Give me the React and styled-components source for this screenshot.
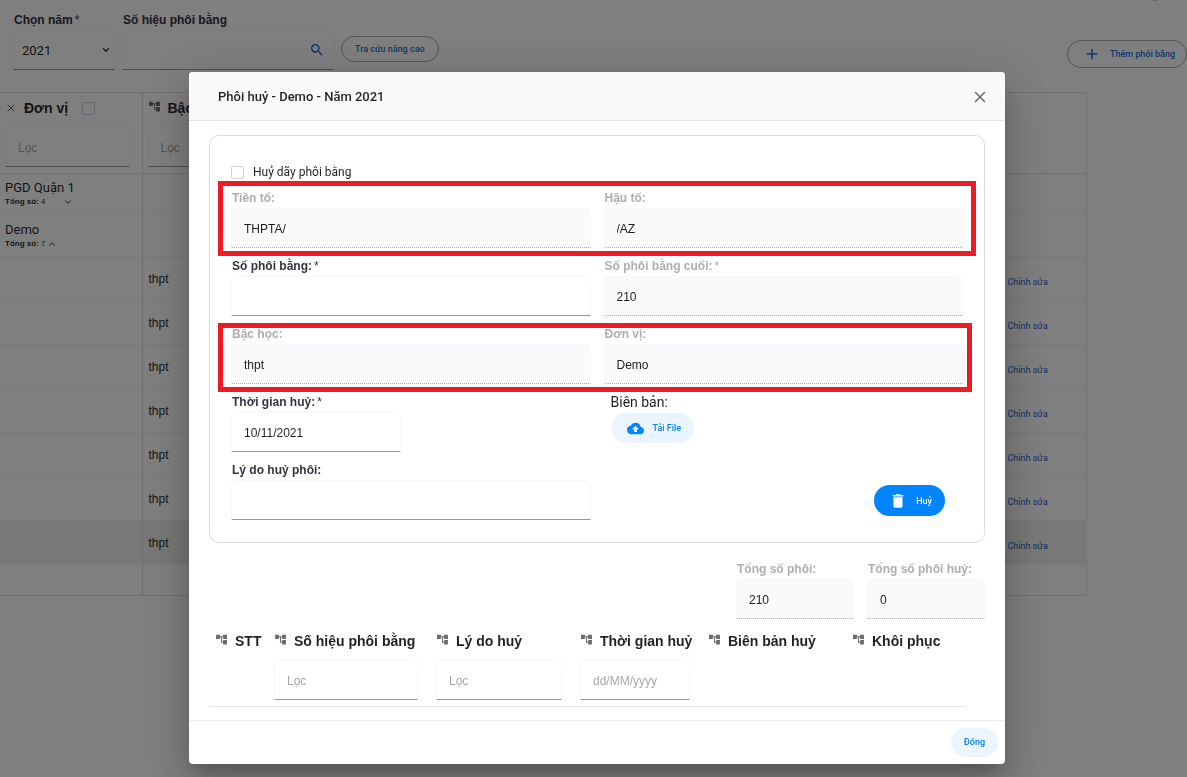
import React, { useId } from 'react';
import styled, { createGlobalStyle, css } from 'styled-components';
import { MdAccountTree, MdAdd, MdCloudUpload, MdDelete, MdSearch } from 'react-icons/md';
import { ChevronDown, ChevronUp, X } from 'lucide-react';

const GlobalStyle = createGlobalStyle`
  *, *::before, *::after { box-sizing: border-box; }
  body {
    margin: 0;
    background: #fff;
    color: rgba(0, 0, 0, 0.87);
    font-family: Roboto, "Liberation Sans", sans-serif;
    font-size: 12px;
    line-height: 16px;
  }
  button, input, select { font: inherit; color: inherit; }
`;

const sans = '"Liberation Sans", Arial, sans-serif';

/* ---------- shared controls ---------- */

const FieldBox = styled.div`
  display: flex;
  flex-direction: column;
  width: ${(p) => p.$width || 'auto'};
  min-width: 0;
`;

const FieldLabel = styled.label`
  padding: 0 1px;
  color: ${(p) => (p.$muted ? '#aeaeb1' : '#33333d')};
  font-family: ${sans};
  font-weight: 700;
  line-height: 20px;
  white-space: nowrap;
`;

const Star = styled.span`
  margin-left: 2px;
  font-weight: 400;
`;

const control = css`
  width: 100%;
  height: 40px;
  padding: 1px 12px 0;
  background: transparent;
  border: 1px solid #f7f7f9;
  border-bottom: 1px solid #999;
  border-radius: 6px 6px 0 0;
  outline: none;
`;

const TextInput = styled.input`
  ${control}
  font-family: ${sans};
  font-weight: 400;
  &::placeholder { color: #a8a8ab; opacity: 1; }
  &:disabled {
    background: #fafafc;
    border-bottom: 1px dotted #a8a8ab;
    color: #1c1c1e;
    opacity: 1;
  }
`;

const Select = styled.select`
  ${control}
  appearance: none;
  grid-area: 1 / 1;
  padding-left: 8px;
  font-size: 13px;
`;

const ControlStack = styled.div`
  display: grid;
  align-items: center;
  & > input { grid-area: 1 / 1; }
`;

const TrailingIcon = styled.span`
  grid-area: 1 / 1;
  justify-self: end;
  display: flex;
  padding-right: ${(p) => p.$inset};
  color: ${(p) => p.$color};
  pointer-events: none;
`;

const CheckInput = styled.input`
  appearance: none;
  flex: none;
  width: 13px;
  height: 13px;
  margin: 0;
  border: 1px solid #cfcfe0;
  border-radius: 2px;
`;

const variants = {
  outline: css`background: transparent; border: 1px solid #a8a8a8; color: #1b6fdc;`,
  soft: css`background: #ecf5ff; border: 0; color: #0084ff;`,
  solid: css`background: #0084ff; border: 0; color: #fff;`,
};

const Pill = styled.button`
  display: inline-flex;
  align-items: center;
  justify-content: center;
  gap: ${(p) => p.$gap || '0'};
  height: ${(p) => p.$height};
  padding: 0 ${(p) => p.$padRight || '13px'} 0 ${(p) => p.$padLeft || '13px'};
  border-radius: 16px;
  font-size: 9px;
  font-weight: 500;
  white-space: nowrap;
  ${(p) => variants[p.$variant]}
`;

const IconButton = styled.button`
  display: flex;
  padding: 0;
  background: none;
  border: 0;
  color: #6b6b6b;
`;

function Field({ label, required, width, ...input }) {
  const id = useId();
  return (
    <FieldBox $width={width}>
      <FieldLabel htmlFor={id} $muted={input.disabled}>
        {label}
        {required && <Star>*</Star>}
      </FieldLabel>
      <TextInput id={id} {...input} />
    </FieldBox>
  );
}

/* ---------- page behind the dialog ---------- */

const Page = styled.main`
  position: relative;
  overflow: hidden;
`;

const Notice = styled.span`
  position: absolute;
  top: -11px;
  right: 26px;
  width: 12px;
  height: 12px;
  border-radius: 50%;
  background: #d9b8bb;
`;

const TopBar = styled.header`
  display: flex;
  align-items: flex-start;
  gap: 7px;
  height: 92px;
  padding: 10px 0 0 13px;
`;

const ActionSlot = styled.div`
  display: flex;
  padding-top: ${(p) => p.$top};
  margin-left: ${(p) => (p.$end ? 'auto' : '0')};
`;

const UnitTable = styled.table`
  width: calc(100% - 100px);
  table-layout: fixed;
  border-collapse: collapse;
  border: 1px solid #e4e4e4;
  border-left: 0;
`;

const UnitTh = styled.th`
  height: 81px;
  padding: 4px 12px 0 5px;
  border-right: ${(p) => (p.$line ? '1px solid #dedee2' : '0')};
  border-bottom: 1px solid #e4e4e4;
  vertical-align: top;
  text-align: left;
`;

const UnitTr = styled.tr`
  height: ${(p) => p.$height};
  background: ${(p) => (p.$active ? '#f0f0ec' : 'transparent')};
`;

const UnitTd = styled.td`
  padding: ${(p) => p.$top || '0'} 0 0 ${(p) => p.$left || '5px'};
  border-top: 1px solid #f2f2f2;
  border-right: ${(p) => (p.$line ? '1px solid #dedee2' : '0')};
  font-family: ${sans};
`;

const HeadLine = styled.div`
  display: flex;
  align-items: center;
  gap: 7px;
  height: 22px;
  margin-bottom: 8px;
  font-family: ${sans};
  font-size: 14px;
  font-weight: 700;
  white-space: nowrap;
  & > svg { flex: none; color: #6b6b6b; margin-bottom: 4px; }
  & > input { margin-left: 7px; }
`;

const GroupName = styled.div`
  font-family: Roboto, sans-serif;
  font-size: 13px;
  line-height: 16px;
`;

const GroupTotal = styled.div`
  display: flex;
  align-items: center;
  gap: ${(p) => p.$gap};
  font-size: 8px;
  line-height: 12px;
`;

const RowLink = styled.a`
  color: #2b5fc0;
  font-family: Roboto, sans-serif;
  font-size: 9px;
  text-decoration: none;
  white-space: nowrap;
`;

/* ---------- dialog ---------- */

const Overlay = styled.div`
  position: fixed;
  inset: 0;
  overflow: auto;
  padding: 72px 182px 13px 189px;
  background: rgba(0, 0, 0, 0.5);
`;

const Dialog = styled.section`
  display: flex;
  flex-direction: column;
  background: #fff;
  border-radius: 4px;
  box-shadow: 0 11px 15px -7px rgba(0, 0, 0, 0.2), 0 24px 38px 3px rgba(0, 0, 0, 0.14),
    0 9px 46px 8px rgba(0, 0, 0, 0.12);
`;

const DialogHeader = styled.header`
  display: flex;
  align-items: center;
  justify-content: space-between;
  height: 49px;
  padding: 2px 16px 0 29px;
  background: #fafafc;
  border-bottom: 1px solid #e4e4e6;
  border-radius: 4px 4px 0 0;
`;

const DialogTitle = styled.h1`
  margin: 0;
  font-size: 13px;
  font-weight: 500;
`;

const DialogBody = styled.div`
  padding: 14px 20px 13px;
`;

const DialogFooter = styled.footer`
  display: flex;
  justify-content: flex-end;
  padding: 7px;
  border-top: 1px solid #ececee;
`;

const FormCard = styled.form`
  padding: 28px 21px 22px;
  border: 1px solid #dcdcde;
  border-radius: 10px;
`;

const CheckLabel = styled.label`
  display: flex;
  align-items: center;
  gap: 9px;
  height: 16px;
`;

const FormRow = styled.div`
  position: relative;
  display: grid;
  grid-template-columns: 1fr 1fr;
  column-gap: 13px;
  padding-top: 8px;
`;

const Highlight = styled.span`
  position: absolute;
  inset: ${(p) => p.$inset};
  border: 5px solid #ed1c24;
  pointer-events: none;
`;

const Attachment = styled.div`
  display: flex;
  flex-direction: column;
  align-items: flex-start;
  gap: 1px;
  padding-left: 7px;
  font-size: 14px;
  line-height: 20px;
`;

const SubmitSlot = styled.div`
  display: flex;
  justify-content: flex-end;
  align-items: flex-start;
  padding: 25px 18px 0 0;
`;

const Totals = styled.div`
  display: flex;
  justify-content: flex-end;
  gap: 13px;
  padding-top: 16px;
`;

const HistoryWrap = styled.div`
  padding-right: 19px;
`;

const HistoryTable = styled.table`
  width: 100%;
  table-layout: fixed;
  border-collapse: collapse;
  border-bottom: 1px solid #e6e6e8;
`;

const HistoryTh = styled.th`
  height: 87px;
  padding: 11px 12px 0 6px;
  vertical-align: top;
  text-align: left;
  font-weight: 400;
`;

const Col = styled.col`
  width: ${(p) => p.$width};
`;

const historyColumns = [
  { title: 'STT', width: '59px' },
  { title: 'Số hiệu phôi bằng', width: '162px', filter: 'Lọc' },
  { title: 'Lý do huỷ', width: '144px', filter: 'Lọc' },
  { title: 'Thời gian huỷ', width: '128px', filter: 'dd/MM/yyyy' },
  { title: 'Biên bản huỷ', width: '144px' },
  { title: 'Khôi phục' },
];

const unitRows = [false, false, false, false, false, false, true];

function BackgroundPage() {
  return (
    <Page>
      <Notice />
      <TopBar>
        <FieldBox $width="102px">
          <FieldLabel htmlFor="year">Chọn năm<Star>*</Star></FieldLabel>
          <ControlStack>
            <Select id="year" defaultValue="2021"><option>2021</option></Select>
            <TrailingIcon $inset="4px" $color="#333"><ChevronDown size={10} strokeWidth={3} /></TrailingIcon>
          </ControlStack>
        </FieldBox>
        <FieldBox $width="212px">
          <FieldLabel htmlFor="serial">Số hiệu phôi bằng</FieldLabel>
          <ControlStack>
            <TextInput id="serial" />
            <TrailingIcon $inset="9px" $color="#0068e0"><MdSearch size={16} /></TrailingIcon>
          </ControlStack>
        </FieldBox>
        <ActionSlot $top="26px">
          <Pill type="button" $variant="outline" $height="26px">Tra cứu nâng cao</Pill>
        </ActionSlot>
        <ActionSlot $top="30px" $end>
          <Pill type="button" $variant="outline" $height="28px" $gap="9px" $padLeft="15px" $padRight="11px">
            <MdAdd size={18} />Thêm phôi bằng
          </Pill>
        </ActionSlot>
      </TopBar>
      <UnitTable>
        <colgroup><Col $width="142px" /><Col /><Col $width="80px" /></colgroup>
        <thead>
          <tr>
            <UnitTh $line>
              <HeadLine>
                <IconButton type="button" aria-label="Bỏ nhóm"><X size={12} strokeWidth={2} /></IconButton>
                Đơn vị
                <CheckInput type="checkbox" aria-label="Chọn tất cả" />
              </HeadLine>
              <TextInput placeholder="Lọc" aria-label="Lọc đơn vị" />
            </UnitTh>
            <UnitTh>
              <HeadLine><MdAccountTree size={13} />Bậc học</HeadLine>
              <TextInput placeholder="Lọc" aria-label="Lọc bậc học" />
            </UnitTh>
            <UnitTh />
          </tr>
        </thead>
        <tbody>
          <UnitTr $height="41px">
            <UnitTd $line>
              <GroupName>PGD Quận 1</GroupName>
              <GroupTotal $gap="18px"><span><b>Tổng số:</b> 4</span><ChevronDown size={10} /></GroupTotal>
            </UnitTd>
            <UnitTd /><UnitTd />
          </UnitTr>
          <UnitTr $height="42px">
            <UnitTd $line>
              <GroupName>Demo</GroupName>
              <GroupTotal $gap="2px"><span><b>Tổng số:</b> 7</span><ChevronUp size={10} /></GroupTotal>
            </UnitTd>
            <UnitTd /><UnitTd />
          </UnitTr>
          {unitRows.map((active, i) => (
            <UnitTr key={i} $height="44px" $active={active}>
              <UnitTd $line />
              <UnitTd $left="6px">thpt</UnitTd>
              <UnitTd $left="1px" $top="6px"><RowLink href="#edit">Chỉnh sửa</RowLink></UnitTd>
            </UnitTr>
          ))}
          <UnitTr $height="31px"><UnitTd $line /><UnitTd /><UnitTd /></UnitTr>
        </tbody>
      </UnitTable>
    </Page>
  );
}

export default function App() {
  return (
    <>
      <GlobalStyle />
      <BackgroundPage />
      <Overlay>
        <Dialog role="dialog" aria-modal="true" aria-labelledby="dialog-title">
          <DialogHeader>
            <DialogTitle id="dialog-title">Phôi huỷ - Demo - Năm 2021</DialogTitle>
            <IconButton type="button" aria-label="Đóng hộp thoại"><X size={18} strokeWidth={2} /></IconButton>
          </DialogHeader>
          <DialogBody>
            <FormCard>
              <CheckLabel><CheckInput type="checkbox" />Huỷ dãy phôi bằng</CheckLabel>
              <FormRow>
                <Field label="Tiền tố:" defaultValue="THPTA/" disabled />
                <Field label="Hậu tố:" defaultValue="/AZ" disabled />
                <Highlight $inset="1px -13px -8px -13px" />
              </FormRow>
              <FormRow>
                <Field label="Số phôi bằng:" required />
                <Field label="Số phôi bằng cuối:" required defaultValue="210" disabled />
              </FormRow>
              <FormRow>
                <Field label="Bậc học:" defaultValue="thpt" disabled />
                <Field label="Đơn vị:" defaultValue="Demo" disabled />
                <Highlight $inset="7px -9px -8px -13px" />
              </FormRow>
              <FormRow>
                <Field label="Thời gian huỷ:" required defaultValue="10/11/2021" width="170px" />
                <Attachment>
                  Biên bản:
                  <Pill type="button" $variant="soft" $height="30px" $gap="9px" $padLeft="16px">
                    <MdCloudUpload size={17} />Tải File
                  </Pill>
                </Attachment>
              </FormRow>
              <FormRow>
                <Field label="Lý do huỷ phôi:" />
                <SubmitSlot>
                  <Pill type="button" $variant="solid" $height="31px" $gap="9px" $padLeft="15px">
                    <MdDelete size={18} />Huỷ
                  </Pill>
                </SubmitSlot>
              </FormRow>
            </FormCard>
            <Totals>
              <Field label="Tổng số phôi:" defaultValue="210" width="118px" disabled />
              <Field label="Tổng số phôi huỷ:" defaultValue="0" width="118px" disabled />
            </Totals>
            <HistoryWrap>
              <HistoryTable>
                <colgroup>{historyColumns.map((c) => <Col key={c.title} $width={c.width} />)}</colgroup>
                <thead>
                  <tr>
                    {historyColumns.map((c) => (
                      <HistoryTh key={c.title}>
                        <HeadLine><MdAccountTree size={13} />{c.title}</HeadLine>
                        {c.filter && <TextInput placeholder={c.filter} aria-label={`Lọc ${c.title}`} />}
                      </HistoryTh>
                    ))}
                  </tr>
                </thead>
              </HistoryTable>
            </HistoryWrap>
          </DialogBody>
          <DialogFooter>
            <Pill type="button" $variant="soft" $height="29px">Đóng</Pill>
          </DialogFooter>
        </Dialog>
      </Overlay>
    </>
  );
}
